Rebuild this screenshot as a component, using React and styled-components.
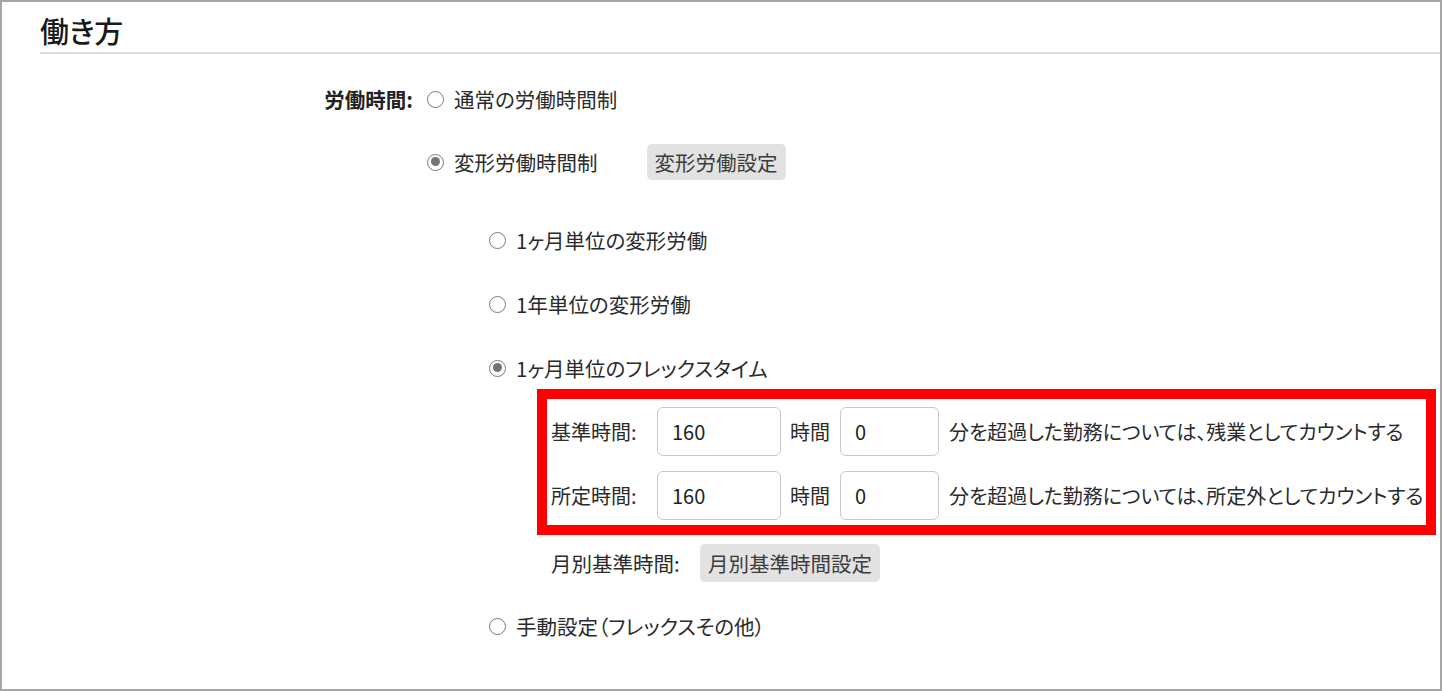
import React from 'react'
import styled, { createGlobalStyle } from 'styled-components'

const GlobalStyle = createGlobalStyle`
  html, body {
    margin: 0;
    padding: 0;
    background: #fff;
  }
  body {
    font-family: "Noto Sans CJK JP", "Noto Sans", sans-serif;
    font-feature-settings: "palt";
    color: #2b2b2b;
  }
`

const Page = styled.div`
  width: 1442px;
  height: 691px;
  box-sizing: border-box;
  border: 2px solid #a6a6a6;
  background: #fff;
  overflow: hidden;
`

const Header = styled.div`
  margin-left: 38px;
  border-bottom: 2px solid #dedede;
`

const Title = styled.h1`
  margin: 0;
  padding: 10px 0 3px;
  font-size: 29px;
  line-height: 37px;
  font-weight: 500;
  color: #1a1a1a;
`

const Form = styled.div`
  display: flex;
  margin: 25px 0 0 38px;
`

const FieldLabel = styled.div`
  width: 373px;
  height: 40px;
  line-height: 40px;
  text-align: right;
  font-size: 20.5px;
  font-weight: 700;
  margin-right: 14px;
  color: #222;
`

const Options = styled.div`
  display: flex;
  flex-direction: column;
`

const Group = styled.div`
  display: flex;
  flex-direction: column;
  margin-left: ${p => p.$indent || 0}px;
  margin-top: ${p => p.$top || 0}px;
`

const Row = styled.div`
  display: flex;
  align-items: center;
  height: ${p => p.$h || 40}px;
  margin-top: ${p => p.$top || 0}px;
  margin-left: ${p => p.$left || 0}px;
  font-size: 20.5px;
  white-space: nowrap;
`

const Radio = styled.span`
  position: relative;
  width: 17px;
  height: 17px;
  box-sizing: border-box;
  border: 1.5px solid #7a7a7a;
  border-radius: 50%;
  margin-right: 10px;
  flex-shrink: 0;
  background: #fff;

  &::after {
    content: '';
    display: ${p => (p.$checked ? 'block' : 'none')};
    position: absolute;
    left: 2.5px;
    top: 2.5px;
    width: 9px;
    height: 9px;
    border-radius: 50%;
    background: #747474;
  }
`

const Button = styled.button`
  height: ${p => p.$h || 36}px;
  margin-left: ${p => p.$left || 0}px;
  padding: 0 8px;
  border: none;
  border-radius: 5px;
  background: #e2e2e2;
  color: #3c3c3c;
  font-family: inherit;
  font-feature-settings: "palt";
  font-size: 20.5px;
  white-space: nowrap;
  cursor: pointer;
`

const Highlight = styled.div`
  width: 899px;
  box-sizing: border-box;
  border: 10px solid #ff0000;
  padding: 8px 0 5px 4px;
  margin: 1px 0 0 48px;
  display: flex;
  flex-direction: column;
  gap: 15px;
`

const InputRow = styled.div`
  display: flex;
  align-items: center;
  font-size: 20px;
  white-space: nowrap;
`

const InputLabel = styled.span`
  width: 106px;
  flex-shrink: 0;
`

const NumberInput = styled.input`
  width: ${p => p.$w}px;
  height: 49px;
  flex-shrink: 0;
  box-sizing: border-box;
  border: 1px solid #c9c9c9;
  border-radius: 6px;
  padding: 0 14px;
  font-family: inherit;
  font-size: 20px;
  color: #222;
  outline: none;
`

const Unit = styled.span`
  flex-shrink: 0;
  margin: 0 10px 0 9px;
`

const Description = styled.span`
  margin-left: 10px;
  letter-spacing: -0.1px;
`

const SubLabel = styled.span`
  width: 149px;
`

const RadioOption = ({ checked, children, ...rest }) => (
  <Row {...rest}>
    <Radio $checked={checked} />
    <span>{children}</span>
  </Row>
)

const HourRow = ({ label, hours, minutes, text }) => (
  <InputRow>
    <InputLabel>{label}</InputLabel>
    <NumberInput $w={124} defaultValue={hours} />
    <Unit>時間</Unit>
    <NumberInput $w={99} defaultValue={minutes} />
    <Description>{text}</Description>
  </InputRow>
)

export default function App() {
  return (
    <Page>
      <GlobalStyle />
      <Header>
        <Title>働き方</Title>
      </Header>
      <Form>
        <FieldLabel>労働時間:</FieldLabel>
        <Options>
          <RadioOption>通常の労働時間制</RadioOption>
          <Row $top={23}>
            <Radio $checked />
            <span>変形労働時間制</span>
            <Button $left={49}>変形労働設定</Button>
          </Row>
          <Group $indent={62} $top={38}>
            <RadioOption>1ヶ月単位の変形労働</RadioOption>
            <RadioOption $top={24}>1年単位の変形労働</RadioOption>
            <RadioOption $top={24} checked>1ヶ月単位のフレックスタイム</RadioOption>
            <Highlight>
              <HourRow
                label="基準時間:"
                hours="160"
                minutes="0"
                text="分を超過した勤務については、残業としてカウントする"
              />
              <HourRow
                label="所定時間:"
                hours="160"
                minutes="0"
                text="分を超過した勤務については、所定外としてカウントする"
              />
            </Highlight>
            <Row $h={38} $top={9} $left={62}>
              <SubLabel>月別基準時間:</SubLabel>
              <Button $h={38}>月別基準時間設定</Button>
            </Row>
            <RadioOption $top={24}>手動設定（フレックスその他）</RadioOption>
          </Group>
        </Options>
      </Form>
    </Page>
  )
}
